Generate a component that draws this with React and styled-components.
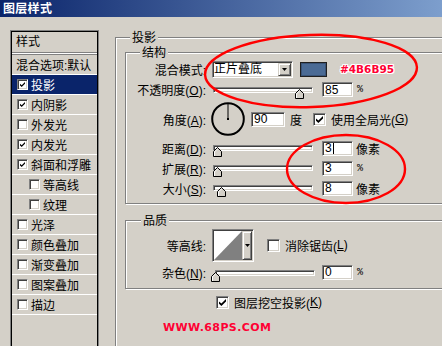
import React from 'react';
import styled, { createGlobalStyle } from 'styled-components';

const GlobalStyle = createGlobalStyle`
  html, body { margin: 0; padding: 0; background: #D4D0C8; }
  body {
    font-family: "Liberation Sans", "Noto Sans CJK SC", sans-serif;
    font-size: 12px;
    color: #000;
  }
  * { box-sizing: border-box; }
`;

const Window = styled.div`
  position: relative;
  width: 442px;
  height: 346px;
  overflow: hidden;
  background: #D4D0C8;
  display: flex;
  flex-direction: column;
`;

const TitleBar = styled.div`
  flex: none;
  height: 17px;
  padding-left: 3px;
  background: linear-gradient(to right, #0A246A 0px, #A6CAF0 600px);
  color: #fff;
  font-family: "Noto Sans CJK SC", sans-serif;
  font-weight: bold;
  font-size: 12px;
  line-height: 16px;
  letter-spacing: 0.3px;
`;

const Main = styled.div`
  flex: 1;
  min-height: 0;
  display: flex;
  align-items: flex-start;
  padding: 14px 0 0 11px;
`;

/* ---------- left list ---------- */
const StyleList = styled.div`
  flex: none;
  width: 87px;
  height: 330px;
  border: 1px solid #000;
  box-shadow: 0 0 0 1px #808080;
  display: flex;
  flex-direction: column;
`;

const ListHeader = styled.div`
  height: 20px;
  padding-left: 4px;
  line-height: 20px;
`;

const ListDivider = styled.div`
  height: 3px;
  border-top: 1px solid #808080;
  border-bottom: 1px solid #808080;
  background: #fff;
`;

const ListRow = styled.div`
  height: 20px;
  display: flex;
  flex-direction: column;
`;

const ListRowBody = styled.div`
  height: 19px;
  display: flex;
  align-items: center;
  padding-left: ${p => (p.$level === 0 ? 4 : p.$level === 2 ? 17 : 5)}px;
  background: ${p => (p.$selected ? '#0A246A' : 'transparent')};
  color: ${p => (p.$selected ? '#fff' : '#000')};
  white-space: nowrap;
`;

const ListLine = styled.div`
  height: 1px;
  background: #fff;
`;

/* ---------- checkbox ---------- */
const Box = styled.span`
  flex: none;
  width: ${p => p.$size}px;
  height: ${p => p.$size}px;
  margin-right: ${p => p.$gap}px;
  border: 1px solid;
  border-color: #808080 #fff #fff #808080;
  box-shadow: inset 1px 1px 0 #404040, inset -1px -1px 0 #D4D0C8;
  background: #fff;
  display: flex;
  align-items: center;
  justify-content: center;
`;

function Checkbox({ checked, size = 13, gap = 4 }) {
  const s = size - 6;
  return (
    <Box $size={size} $gap={gap}>
      {checked && (
        <svg width={s} height={s} viewBox="0 0 7 7">
          <polygon points="0,2.4 2.4,4.6 7,0 7,2.4 2.4,7 0,4.8" fill="#000" />
        </svg>
      )}
    </Box>
  );
}

/* ---------- right side ---------- */
const RightCol = styled.div`
  flex: none;
  margin: 6px 0 0 17px;
`;

const Group = styled.div`
  position: relative;
  width: ${p => p.$w}px;
  ${p => (p.$h ? `height: ${p.$h}px;` : '')}
  margin-top: ${p => p.$mt || 0}px;
  padding: ${p => p.$pad};
  border: 1px solid #808080;
  box-shadow: 1px 1px 0 #fff, inset 1px 1px 0 #fff;
`;

const GroupTitle = styled.div`
  position: absolute;
  top: -7px;
  left: ${p => p.$left || 14}px;
  padding: 0 2px;
  background: #D4D0C8;
  font-family: "Noto Sans CJK SC", sans-serif;
  line-height: 12px;
`;

const FormRow = styled.div`
  display: flex;
  align-items: center;
  height: ${p => p.$h}px;
`;

const RowLabel = styled.div`
  flex: none;
  width: 80px;
  margin-right: 6px;
  text-align: right;
  white-space: nowrap;
`;

const Select = styled.div`
  flex: none;
  width: 81px;
  height: 17px;
  border: 1px solid;
  border-color: #808080 #fff #fff #808080;
  box-shadow: inset 1px 1px 0 #404040, inset -1px -1px 0 #D4D0C8;
  background: #fff;
  display: flex;
  align-items: center;
  padding: 0 1px 0 1px;
  white-space: nowrap;
`;

const SelectText = styled.span`
  flex: 1;
  line-height: 13px;
`;

const DropButton = styled.span`
  flex: none;
  width: ${p => p.$w || 13}px;
  height: ${p => p.$h || 13}px;
  background: #D4D0C8;
  border: 1px solid;
  border-color: #D4D0C8 #404040 #404040 #D4D0C8;
  box-shadow: inset 1px 1px 0 #fff, inset -1px -1px 0 #808080;
  display: flex;
  align-items: center;
  justify-content: center;
`;

function Arrow() {
  return (
    <svg width="5" height="3" viewBox="0 0 5 3">
      <polygon points="0,0 5,0 2.5,3" fill="#000" />
    </svg>
  );
}

const Swatch = styled.span`
  flex: none;
  width: 27px;
  height: 15px;
  margin-left: 7px;
  background: #4B6B95;
  border: 1px solid #202020;
  box-shadow: inset 0 0 0 1px #3a5478;
`;

const HexNote = styled.span`
  margin-left: 13px;
  font-family: "DejaVu Sans", sans-serif;
  font-weight: bold;
  font-size: 10.5px;
  color: #FF0033;
  text-shadow: 1px 0 #fff, -1px 0 #fff, 0 1px #fff, 0 -1px #fff,
    1px 1px #fff, -1px -1px #fff, 1px -1px #fff, -1px 1px #fff;
`;

const SliderWrap = styled.div`
  position: relative;
  flex: none;
  align-self: flex-start;
  width: 100px;
  height: 12px;
  margin-top: ${p => p.$top}px;
  margin-left: ${p => p.$ml || 1}px;
`;

const Track = styled.div`
  height: 6px;
  border: 1px solid;
  border-color: #808080 #fff #fff #808080;
  box-shadow: inset 1px 1px 0 #404040, inset -1px -1px 0 #D4D0C8;
  background: #fff;
`;

const Thumb = styled.svg`
  position: absolute;
  top: 2px;
`;

function Slider({ pos, top = 7, ml }) {
  return (
    <SliderWrap $top={top} $ml={ml}>
      <Track />
      <Thumb width="9" height="10" viewBox="0 0 9 10" style={{ left: pos }}>
        <polygon points="4.5,0.5 8.5,4.5 8.5,9.5 0.5,9.5 0.5,4.5" fill="#D4D0C8" stroke="#000" />
        <polyline points="1.5,9 1.5,4.9 4.5,1.9" fill="none" stroke="#fff" />
      </Thumb>
    </SliderWrap>
  );
}

const Field = styled.div`
  flex: none;
  width: ${p => p.$w || 31}px;
  height: 15px;
  margin-left: ${p => p.$ml || 0}px;
  border: 1px solid;
  border-color: #808080 #fff #fff #808080;
  box-shadow: inset 1px 1px 0 #404040, inset -1px -1px 0 #D4D0C8;
  background: #fff;
  padding-left: 2px;
  display: flex;
  align-items: center;
  line-height: 12px;
`;

const Caret = styled.span`
  display: inline-block;
  width: 1px;
  height: 11px;
  margin-left: 1px;
  background: #000;
`;

const Unit = styled.span`
  flex: none;
  margin-left: ${p => p.$ml || 3}px;
  white-space: nowrap;
`;

const Percent = styled.span`
  flex: none;
  margin-left: 4px;
  font-family: "Liberation Mono", monospace;
  font-size: 10px;
`;

const Dial = styled.svg`
  flex: none;
  margin-left: -1px;
`;

const CheckLabel = styled.label`
  display: flex;
  align-items: center;
  margin-left: ${p => p.$ml || 0}px;
  white-space: nowrap;
`;

const Contour = styled.div`
  flex: none;
  width: 42px;
  height: 33px;
  border: 1px solid;
  border-color: #808080 #fff #fff #808080;
  box-shadow: inset 1px 1px 0 #404040, inset -1px -1px 0 #D4D0C8;
  padding: 1px;
  display: flex;
`;

const ContourPreview = styled.svg`
  flex: none;
  display: block;
`;

const KnockRow = styled.div`
  display: flex;
  align-items: center;
  height: 14px;
  margin-top: 6px;
  padding-left: 91px;
`;

const Watermark = styled.div`
  margin-top: 12px;
  padding-left: 38px;
  font-family: "DejaVu Sans", sans-serif;
  font-weight: bold;
  font-size: 11px;
  letter-spacing: 0.4px;
  line-height: 13px;
  color: #FF0033;
`;

const Annotations = styled.svg`
  position: absolute;
  left: 0;
  top: 0;
  pointer-events: none;
`;

const listItems = [
  { label: '混合选项:默认', level: 0 },
  { label: '投影', level: 1, checked: true, selected: true },
  { label: '内阴影', level: 1, checked: true },
  { label: '外发光', level: 1 },
  { label: '内发光', level: 1, checked: true },
  { label: '斜面和浮雕', level: 1, checked: true },
  { label: '等高线', level: 2 },
  { label: '纹理', level: 2 },
  { label: '光泽', level: 1 },
  { label: '颜色叠加', level: 1 },
  { label: '渐变叠加', level: 1 },
  { label: '图案叠加', level: 1 },
  { label: '描边', level: 1 },
];

function Key({ children }) {
  return <u>{children}</u>;
}

export default function App() {
  return (
    <>
      <GlobalStyle />
      <Window>
        <TitleBar>图层样式</TitleBar>
        <Main>
          <StyleList>
            <ListHeader>样式</ListHeader>
            <ListDivider />
            {listItems.map(it => (
              <ListRow key={it.label}>
                <ListRowBody $level={it.level} $selected={it.selected}>
                  {it.level > 0 && <Checkbox size={11} gap={3} checked={it.checked} />}
                  {it.label}
                </ListRowBody>
                <ListLine />
              </ListRow>
            ))}
          </StyleList>

          <RightCol>
            <Group $w={340} $h={320} $pad="14px 0 0 9px">
              <GroupTitle>投影</GroupTitle>

              <Group $w={320} $pad="6px 0 5px 0">
                <GroupTitle>结构</GroupTitle>
                <FormRow $h={20}>
                  <RowLabel>混合模式:</RowLabel>
                  <Select>
                    <SelectText>正片叠底</SelectText>
                    <DropButton>
                      <Arrow />
                    </DropButton>
                  </Select>
                  <Swatch />
                  <HexNote>#4B6B95</HexNote>
                </FormRow>
                <FormRow $h={21}>
                  <RowLabel>不透明度(<Key>O</Key>):</RowLabel>
                  <Slider pos={82} top={8} />
                  <Field $ml={9}>85</Field>
                  <Percent>%</Percent>
                </FormRow>
                <FormRow $h={38}>
                  <RowLabel>角度(<Key>A</Key>):</RowLabel>
                  <Dial width="34" height="34" viewBox="0 0 34 34">
                    <circle cx="17" cy="17" r="15.8" fill="none" stroke="#000" strokeWidth="2" />
                    <line x1="17" y1="17" x2="17" y2="2" stroke="#000" strokeWidth="1" />
                    <rect x="16" y="16" width="2" height="2" fill="#000" />
                  </Dial>
                  <Field $w={34} $ml={6}>90</Field>
                  <Unit $ml={5}>度</Unit>
                  <CheckLabel $ml={11}>
                    <Checkbox checked size={13} gap={5} />
                    使用全局光(<Key>G</Key>)
                  </CheckLabel>
                </FormRow>
                <FormRow $h={20}>
                  <RowLabel>距离(<Key>D</Key>):</RowLabel>
                  <Slider pos={0} />
                  <Field $ml={9}>
                    3<Caret />
                  </Field>
                  <Unit>像素</Unit>
                </FormRow>
                <FormRow $h={20}>
                  <RowLabel>扩展(<Key>R</Key>):</RowLabel>
                  <Slider pos={0} />
                  <Field $ml={9}>3</Field>
                  <Percent>%</Percent>
                </FormRow>
                <FormRow $h={20}>
                  <RowLabel>大小(<Key>S</Key>):</RowLabel>
                  <Slider pos={4} />
                  <Field $ml={9}>8</Field>
                  <Unit>像素</Unit>
                </FormRow>
              </Group>

              <Group $w={320} $mt={16} $pad="7px 0 6px 0">
                <GroupTitle $left={15}>品质</GroupTitle>
                <FormRow $h={34}>
                  <RowLabel>等高线:</RowLabel>
                  <Contour>
                    <ContourPreview width="28" height="29" viewBox="0 0 28 29">
                      <rect x="0" y="0" width="28" height="29" fill="#fff" />
                      <polygon points="0,29 28,0 28,29" fill="#808080" />
                    </ContourPreview>
                    <DropButton $w={10} $h={29}>
                      <Arrow />
                    </DropButton>
                  </Contour>
                  <CheckLabel $ml={13}>
                    <Checkbox size={13} gap={5} />
                    消除锯齿(<Key>L</Key>)
                  </CheckLabel>
                </FormRow>
                <FormRow $h={20}>
                  <RowLabel>杂色(<Key>N</Key>):</RowLabel>
                  <Slider pos={-4} top={8} ml={3} />
                  <Field $ml={7}>0</Field>
                  <Percent>%</Percent>
                </FormRow>
              </Group>

              <KnockRow>
                <Checkbox checked size={13} gap={5} />
                图层挖空投影(<Key>K</Key>)
              </KnockRow>
              <Watermark>WWW.68PS.COM</Watermark>
            </Group>
          </RightCol>
        </Main>

        <Annotations width="442" height="346" viewBox="0 0 442 346">
          <ellipse
            cx="311"
            cy="71"
            rx="106"
            ry="36"
            transform="rotate(-2 311 71)"
            fill="none"
            stroke="#FF0000"
            strokeWidth="2.4"
          />
          <ellipse cx="346" cy="169" rx="59" ry="34" fill="none" stroke="#FF0000" strokeWidth="2.4" />
        </Annotations>
      </Window>
    </>
  );
}
